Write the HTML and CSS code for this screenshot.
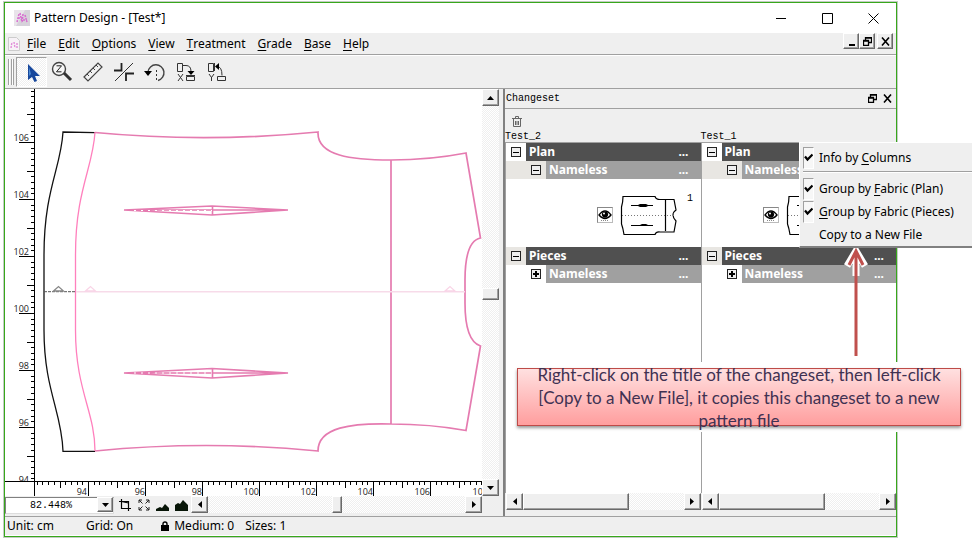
FILE: index.html
```html
<!DOCTYPE html>
<html lang="en">
<head>
<meta charset="utf-8">
<title>Pattern Design</title>
<link rel="stylesheet" href="styles.css">
</head>
<body>
<svg class="defs" aria-hidden="true">
  <symbol id="restore" viewBox="0 0 9 9"><path d="M2.500 3V.5h6v5H6M2 1h7M.5 3.500h5v5h-5zM0 4h6" fill="none" stroke="#000" stroke-width="1.300"/></symbol>
  <symbol id="cross" viewBox="0 0 9 9"><path d="M1 .5l7 8M8 .5l-7 8" fill="none" stroke="#000" stroke-width="1.600"/></symbol>
  <symbol id="eye" viewBox="0 0 14 12"><path d="M1 6Q7-2 13 6Q7 13 1 6z" fill="#fff" stroke="#000" stroke-width="1.300"/><circle cx="7" cy="5.600" r="3.100"/><circle cx="6" cy="4.600" r="1" fill="#fff"/><path d="M3 11.500h8" stroke="#888" stroke-dasharray="1 1"/></symbol>
  <symbol id="piece" viewBox="0 0 58 42"><path d="M3 2.500H35Q36 5.500 40 5.500H46H54L56 16Q53 18 53 21Q53 24 56 27L54 38H46H40Q36 37.500 35 40.500H4Q3 34 1.500 30V13Q3 8 3 2.500zM45.500 6V37" fill="none" stroke="#000" stroke-width="1.200"/><path d="M2 21.500H54" stroke="#777" stroke-dasharray="1 2"/><path d="M11 11H18L20 10H26L28 11H33V12H28L26 13H20L18 12H11zM11 31H20L22 30H26L28 31H33V32H11z"/></symbol>
  <symbol id="tri-left" viewBox="0 0 4 7"><path d="M4 0v7L0 3.500z"/></symbol>
  <symbol id="tri-right" viewBox="0 0 4 7"><path d="M0 0v7L4 3.500z"/></symbol>
  <symbol id="tri-up" viewBox="0 0 7 4"><path d="M0 4h7L3.500 0z"/></symbol>
  <symbol id="tri-down" viewBox="0 0 7 4"><path d="M0 0h7L3.500 4z"/></symbol>
  <symbol id="check" viewBox="0 0 9 9"><path d="M1 3.500L3.500 6.500L8.500 1.500" fill="none" stroke="#000" stroke-width="2.200"/></symbol>
</svg>

<main class="app">
  <header class="titlebar">
    <svg class="appicon" viewBox="0 0 16 16"><rect width="16" height="16" fill="#e9e4ea"/><path d="M11 0h5v16H2z" fill="#d6d2da"/><path d="M3 12l2-8M6 3l2 9M9 4l-1 9M11 5l2 7M4 8h4M9 10h4" stroke="#d86bd0" stroke-width="1.500" stroke-dasharray="2 1" fill="none"/></svg>
    <h1>Pattern Design - [Test*]</h1>
    <div class="wincontrols">
      <button aria-label="Minimize"><svg width="11" height="11"><path d="M0 5.500h10" stroke="#000"/></svg></button>
      <button aria-label="Maximize"><svg width="11" height="11"><path d="M.5.5h10v10H.5z" stroke="#000" fill="none"/></svg></button>
      <button aria-label="Close"><svg width="11" height="11"><path d="M.5.5l10 10M10.500.5l-10 10" stroke="#000"/></svg></button>
    </div>
  </header>

  <nav class="menubar">
    <svg class="docicon" viewBox="0 0 12 14"><path d="M.5.5h8l3 3v10H.5z" fill="#f7f2f7" stroke="#ccc"/><path d="M3 11l1-6M6 5l1 6M9 6v5" stroke="#e08ad8" stroke-width="1.400" stroke-dasharray="2 1"/></svg>
    <button><u>F</u>ile</button><button><u>E</u>dit</button><button><u>O</u>ptions</button><button><u>V</u>iew</button><button><u>T</u>reatment</button><button><u>G</u>rade</button><button><u>B</u>ase</button><button><u>H</u>elp</button>
    <div class="mdi">
      <button class="raised" aria-label="Minimize document"><svg width="9" height="9"><path d="M2 8h6" stroke="#000" stroke-width="2"/></svg></button>
      <button class="raised" aria-label="Restore document"><svg width="9" height="9"><use href="#restore"/></svg></button>
      <button class="raised last" aria-label="Close document"><svg width="9" height="9"><use href="#cross"/></svg></button>
    </div>
  </nav>

  <div class="toolbar">
    <span class="grip"></span>
    <button class="active" aria-label="Select"><svg width="24" height="24"><path d="M9 4v16l4-3 2.500 5 2.500-1-2-5h5z" fill="#17479c"/><path d="M10 7v9l2-2z" fill="#4c8bd4"/></svg></button>
    <button aria-label="Zoom"><svg width="24" height="24"><circle cx="9" cy="9" r="6.500" fill="#f6f6f6" stroke="#444" stroke-width="1.400"/><path d="M6.500 5.800h5l-5 6h5" fill="none" stroke="#222"/><path d="M14 13l7 7" stroke="#333" stroke-width="3"/></svg></button>
    <button aria-label="Measure"><svg width="24" height="24"><path d="M3 17L17 3l4 4L7 21z" fill="#f2f2f2" stroke="#444" stroke-width="1.200"/><path d="M6 14l2 2M9 11l2 2M12 8l2 2M15 5l2 2" stroke="#444"/></svg></button>
    <button aria-label="Intersect"><svg width="24" height="24"><path d="M3 21L21 3" stroke="#333"/><path d="M2 10.500h7.500V3M14 21v-7.500h8" stroke="#222" stroke-width="1.800" fill="none"/></svg></button>
    <button aria-label="Rotate"><svg width="24" height="24"><path d="M5 12A8 8 0 1 1 15 20.500" stroke="#444" stroke-width="1.400" fill="none"/><path d="M1 11h8l-4 5z"/><path d="M13.500 10v10" stroke="#333" stroke-dasharray="2 2"/></svg></button>
    <button aria-label="Align X"><svg width="24" height="24"><path d="M3.500 3.500h5v8h-5zM12.500 16.500h8v4h-8zM9 5.500h3q5 0 5 6" stroke="#333" fill="none"/><path d="M13.500 11h7l-3.500 4z"/><path d="M12 15.500h9M4 14l5 7M9 14l-5 7" stroke="#333"/></svg></button>
    <button aria-label="Align Y"><svg width="24" height="24"><path d="M3.500 3.500h5v8h-5zM12.500 16.500h8v4h-8zM12 6.500q5 0 5 9M9.500 3v8M4 14l2.500 3.500L9 14M6.500 17v4" stroke="#333" fill="none"/><path d="M14 3v7l-4-3.500z"/></svg></button>
  </div>

  <div class="workspace">
    <section class="drawing">
      <svg class="canvas" viewBox="5 89 477 407" preserveAspectRatio="xMinYMin slice" role="img" aria-label="Pattern drawing">
        <g fill="none" stroke="#e57bb0" stroke-width="1.700">
          <path d="M95 132.600L63 132C61 168 44 190 44 255V330C44 390 62 412 63 451.300H95" stroke="#111" stroke-width="1.300"/>
          <path d="M95 132C93 168 75.500 190 75.500 255V330C75.500 390 95 412 95 451" stroke="#ff80bd" stroke-width="1.300"/>
          <path d="M95 132.500Q206 143 318 132C317 156 352 160 391 160Q430 160 466 153L480.500 238Q465 241 465 280V303Q465 341 480.500 346L466 430.500Q430 424 391 424C352 423 318 427 318 451Q206 440 95 451M391 160V424"/>
          <path d="M124 210L212 206L288 210L212 215zM124 210H288M212.500 206V215M124 373L212 368.500L288 373L212 378zM124 373H288M212.500 368V378" stroke-width="1.600"/>
          <path d="M134 210.500H212M134 373H212" stroke="#fff" stroke-dasharray="2 5" stroke-width="1.200"/>
          <path d="M44 291.700H75" stroke="#555" stroke-width="1" stroke-dasharray="3 1"/>
          <path d="M76 291.700H465" stroke="#f7dbe9" stroke-width="1.500"/>
          <path d="M53.500 291L58.500 286.500L63.500 291z" stroke="#888" stroke-width="1.300"/>
          <path d="M85.500 291L90.500 286.500L95.500 291zM445 291L450 286.500L455 291z" stroke="#f9d5e7" stroke-width="1.300"/>
        </g>
        <rect x="5" y="481" width="1000" height="15" fill="#fff"/>
        <path d="M34.500 89V496M5 481.500H1005" stroke="#000" fill="none"/>
        <path id="ticks" stroke="#000" fill="none"/>
        <g class="scale">
          <text x="29" y="141">106</text><text x="29" y="198">104</text><text x="29" y="255">102</text><text x="29" y="312">100</text><text x="29" y="369">98</text><text x="29" y="426">96</text>
          <clipPath id="cut"><path d="M5 440h30v41H5z"/></clipPath><text x="29" y="483" clip-path="url(#cut)">94</text>
          <text x="87" y="495">94</text><text x="145" y="495">96</text><text x="202" y="495">98</text><text x="259" y="495">100</text><text x="316" y="495">102</text><text x="373" y="495">104</text><text x="430" y="495">106</text><text x="488" y="495">108</text>
        </g>
      </svg>
      <div class="scroll vertical">
        <button class="raised" aria-label="Scroll up"><svg width="7" height="4"><use href="#tri-up"/></svg></button>
        <span class="space-a"></span><span class="thumb raised"></span><span class="space-b"></span>
        <button class="raised" aria-label="Scroll down"><svg width="7" height="4"><use href="#tri-down"/></svg></button>
      </div>
      <div class="zoombar">
        <div class="combo">
          <select aria-label="Zoom level"><option>82.448%</option></select>
          <span class="drop raised"><svg width="7" height="4"><use href="#tri-down"/></svg></span>
        </div>
        <button aria-label="Fit piece"><svg width="12" height="12"><path d="M2.500 0v9.500H9.500V2.500H0M9.500 12V8M12 9.500H9M2.500 2.500L9.500 4" stroke="#000" stroke-width="1.200" fill="none"/></svg></button>
        <button aria-label="Fit all"><svg width="12" height="12"><path d="M1 4V1h3M8 1h3v3M11 8v3H8M4 11H1V8M1 1l3.500 3.500M11 1L7.500 4.500M11 11L7.500 7.500M1 11l3.500-3.500" stroke="#222" fill="none"/></svg></button>
        <button aria-label="Smaller"><svg width="13" height="12"><path d="M0 12V10l4-2 2 1 3-4 4 4v3z" fill="#071507"/></svg></button>
        <button aria-label="Larger"><svg width="13" height="12"><path d="M0 12V6l3-2 2 1 3-4 5 5v6z" fill="#071507"/></svg></button>
        <div class="scroll horizontal">
          <button class="raised" aria-label="Scroll left"><svg width="4" height="7"><use href="#tri-left"/></svg></button>
          <span class="space-a"></span><span class="thumb raised"></span><span class="space-b"></span>
          <button class="raised" aria-label="Scroll right"><svg width="4" height="7"><use href="#tri-right"/></svg></button>
        </div>
      </div>
    </section>

    <aside class="panel">
      <div class="paneltitle">
        <h2>Changeset</h2>
        <button aria-label="Float panel"><svg width="9" height="9"><use href="#restore"/></svg></button>
        <button aria-label="Close panel"><svg width="9" height="9"><use href="#cross"/></svg></button>
      </div>
      <div class="paneltools"><button aria-label="Delete"><svg width="10" height="11"><path d="M0 2.500h10M3.500 2V.5h3V2M1.500 3v7.500h7V3M3.500 5v4M5 5v4M6.500 5v4" stroke="#666" fill="none"/></svg></button></div>
      <div class="columns">
        <section class="column">
          <h3>Test_2</h3>
          <div class="tree">
            <div class="row plan"><button class="toggle" aria-label="Collapse"></button><b>Plan<i>...</i></b></div>
            <div class="row sub"><button class="toggle" aria-label="Collapse"></button><b>Nameless<i>...</i></b></div>
            <div class="preview"><button class="eye" aria-label="Show piece"><svg width="14" height="12"><use href="#eye"/></svg></button><svg class="piece" width="58" height="42"><use href="#piece"/></svg><span>1</span></div>
            <div class="row"><button class="toggle" aria-label="Collapse"></button><b>Pieces<i>...</i></b></div>
            <div class="row sub closed"><button class="toggle plus" aria-label="Expand"></button><b>Nameless<i>...</i></b></div>
          </div>
          <div class="scroll horizontal"><button class="raised" aria-label="Scroll left"><svg width="4" height="7"><use href="#tri-left"/></svg></button><span class="thumb raised wide"></span><span class="space-b"></span><button class="raised" aria-label="Scroll right"><svg width="4" height="7"><use href="#tri-right"/></svg></button></div>
        </section>
        <section class="column">
          <h3>Test_1</h3>
          <div class="tree">
            <div class="row plan"><button class="toggle" aria-label="Collapse"></button><b>Plan<i>...</i></b></div>
            <div class="row sub"><button class="toggle" aria-label="Collapse"></button><b>Nameless<i>...</i></b></div>
            <div class="preview shifted"><button class="eye" aria-label="Show piece"><svg width="14" height="12"><use href="#eye"/></svg></button><svg class="piece" width="58" height="42"><use href="#piece"/></svg></div>
            <div class="row"><button class="toggle" aria-label="Collapse"></button><b>Pieces<i>...</i></b></div>
            <div class="row sub closed"><button class="toggle plus" aria-label="Expand"></button><b>Nameless<i>...</i></b></div>
          </div>
          <div class="scroll horizontal"><button class="raised" aria-label="Scroll left"><svg width="4" height="7"><use href="#tri-left"/></svg></button><span class="thumb raised wide"></span><span class="space-b"></span><button class="raised" aria-label="Scroll right"><svg width="4" height="7"><use href="#tri-right"/></svg></button></div>
        </section>
      </div>
    </aside>
  </div>

  <footer class="status">
    <span>Unit: cm</span><span>Grid: On</span>
    <span class="medium"><svg width="8" height="10"><path d="M0 4h8v6H0z"/><path d="M2 5V3q0-2 2-2t2 2v2" fill="none" stroke="#000" stroke-width="1.400"/></svg>Medium: 0</span>
    <span>Sizes: 1</span>
  </footer>

  <div class="context">
    <button><span class="mark"><svg width="9" height="9"><use href="#check"/></svg></span><span>Info by <u>C</u>olumns</span></button>
    <hr>
    <button><span class="mark"><svg width="9" height="9"><use href="#check"/></svg></span><span>Group by <u>F</u>abric (Plan)</span></button>
    <button><span class="mark"><svg width="9" height="9"><use href="#check"/></svg></span><span><u>G</u>roup by Fabric (Pieces)</span></button>
    <button><span class="nomark"></span><span>Copy to a New File</span></button>
  </div>
  <div class="callout"><p>Right-click on the title of the changeset, then left-click<br>[Copy to a New File], it copies this changeset to a new<br>pattern file</p></div>
  <svg class="arrow" width="24" height="108"><path d="M12 2V28M3 18L12 3L21 18" fill="none" stroke="#fff" stroke-width="7"/><path d="M12 3V108M5 17L12 3L19 17" fill="none" stroke="#c0504d" stroke-width="3"/></svg>
</main>
<script src="ticks.js"></script>
</body>
</html>
```
FILE: styles.css
```css
* { box-sizing: border-box; }
body {
  margin: 0;
  padding: 2px 75px 10px 4px;
  min-height: 100vh;
  display: flex;
  overflow: hidden;
  background: #fff;
  color: #000;
  font: 12px/16px "Noto Sans", "Open Sans", sans-serif;
}
button { padding: 0; margin: 0; border: 0; background: none; color: inherit; font: inherit; display: flex; align-items: center; justify-content: center; }
h1, h2, h3, p { margin: 0; font: inherit; }
svg { display: block; flex: none; }
.defs { position: absolute; width: 0; height: 0; }
u { text-underline-offset: 2px; }

.app {
  position: relative;
  flex: 1;
  min-width: 0;
  display: flex;
  flex-direction: column;
  border: 1px solid #37a71b;
  box-shadow: 0 0 0 1px #c4ccc4;
  background: #efefef;
}
.raised { background: #efefef; border: 1px solid; border-color: #fff #696969 #696969 #fff; box-shadow: inset -1px -1px #a0a0a0; }

.titlebar { height: 30px; flex: none; display: flex; align-items: center; gap: 4px; padding-left: 9px; background: #fff; }
.appicon { width: 16px; height: 16px; }
.wincontrols { display: flex; margin-left: auto; }
.wincontrols button { width: 46px; height: 30px; }

.menubar { height: 22px; flex: none; display: flex; align-items: center; gap: 12px; padding: 0 3px; border-bottom: 1px solid #a0a0a0; }
.docicon { width: 12px; height: 14px; margin-right: -5px; }
.mdi { margin-left: auto; align-self: flex-start; display: flex; }
.mdi button { width: 16px; height: 16px; }
.mdi .last { margin-left: 2px; }

.toolbar { height: 34px; flex: none; display: flex; align-items: center; padding: 0 3px; border-top: 1px solid #fff; border-bottom: 1px solid #a0a0a0; }
.grip { width: 6px; height: 26px; margin-right: 2px; border: solid #a0a0a0; border-width: 0 1px; background: linear-gradient(90deg, #fff 1px, #efefef 1px 2px, #a0a0a0 2px 3px, #fff 3px); }
.toolbar button { width: 31px; height: 30px; }
.toolbar button svg { margin-right: 2px; }
.toolbar .active { background: repeating-conic-gradient(#fff 0 25%, #efefef 0 50%) 0 0 / 2px 2px; border: 1px solid; border-color: #a0a0a0 #fff #fff #a0a0a0; }

.workspace { flex: 1; min-height: 0; display: flex; }
.drawing { flex: 1; min-width: 0; display: grid; grid-template-columns: 1fr 17px; grid-template-rows: 1fr 20px; padding-right: 4px; }
.canvas { width: 100%; height: 100%; min-height: 0; background: #fff; }
.scale { font: 9px "Open Sans", sans-serif; text-anchor: end; fill: #222; }
.scroll { display: flex; background: repeating-conic-gradient(#fff 0 25%, #efefef 0 50%) 0 0 / 2px 2px; }
.scroll button { flex: none; width: 17px; height: 17px; }
.vertical { flex-direction: column; }
.vertical .space-a { flex: 182; }
.vertical .space-b { flex: 180; }
.vertical .thumb { height: 12px; }
.horizontal { height: 17px; }
.thumb { flex: none; }
.zoombar { grid-column: 1 / 3; display: flex; align-items: flex-start; padding-right: 17px; }
.zoombar > button { width: 19px; height: 18px; }
.zoombar .scroll { flex: 1; }
.zoombar .space-a { flex: 124; }
.zoombar .space-b { flex: 124; }
.zoombar .thumb { width: 10px; }
.combo { width: 109px; height: 17px; position: relative; margin-right: 1px; }
.combo select { appearance: none; width: 100%; height: 100%; padding: 0 24px; border: 1px solid; border-color: #808080 #ddd #ddd #808080; border-radius: 0; background: #fff; color: #000; font: 10px "Liberation Mono", monospace; }
.drop { position: absolute; right: 1px; top: 1px; bottom: 1px; width: 16px; display: flex; align-items: center; justify-content: center; pointer-events: none; }

.panel { flex: none; width: 393px; display: flex; flex-direction: column; border-left: 2px solid #808080; padding-bottom: 6px; }
.paneltitle { height: 20px; flex: none; display: flex; align-items: center; gap: 6px; padding: 0 4px 0 1px; border-bottom: 1px solid #a0a0a0; }
.paneltitle h2 { margin-right: auto; font: 10px "Liberation Mono", monospace; }
.paneltools { height: 22px; flex: none; display: flex; align-items: center; padding: 2px 7px 0; }
.columns { flex: 1; min-height: 0; display: grid; grid-template-columns: 1fr 1fr; }
.column { min-width: 0; display: flex; flex-direction: column; }
.column h3 { height: 11px; flex: none; font: 10px/11px "Liberation Mono", monospace; }
.tree { flex: 1; border: solid #a0a0a0; border-width: 1px 0 0 1px; background: #fff; }
.column > .scroll { margin-left: 1px; }
.column .wide { width: 106px; }
.column .space-b { flex: 1; }
.row { height: 18px; display: flex; align-items: center; padding-left: 5px; gap: 5px; background: #e8e6e2; }
.row.plan, .row.closed { background: #fff; }
.row.sub { padding-left: 25px; }
.row b { flex: 1; height: 100%; display: flex; justify-content: space-between; padding: 0 12px 0 3px; background: #505050; color: #fff; font: bold 12px/18px "Noto Sans", sans-serif; }
.row.sub b { background: #a0a0a0; }
.row i { font-style: normal; }
.toggle { flex: none; width: 10px; height: 10px; border: 1px solid #222; background: linear-gradient(#000, #000) center / 6px 1px no-repeat, #eee; }
.toggle.plus { background: linear-gradient(#000, #000) center / 6px 2px no-repeat, linear-gradient(#000, #000) center / 2px 6px no-repeat, #eee; }
.preview { height: 68px; display: flex; align-items: center; padding: 4px 6px 0 91px; gap: 7px; overflow: hidden; }
.preview.shifted { padding-left: 61px; }
.preview span { align-self: flex-start; margin: 8px 0 0 2px; font: 10px/16px "Liberation Mono", monospace; }
.eye { flex: none; width: 16px; height: 16px; border: 1px solid; border-color: #888 #bbb #bbb #888; }

.status { height: 20px; flex: none; display: flex; align-items: center; gap: 32px; padding: 0 2px 1px; border-top: 1px solid #a0a0a0; border-bottom: 1px solid #fff; }
.medium { display: flex; align-items: center; gap: 5px; margin: 0 -21px 0 -4px; }

.context { position: absolute; left: 794px; top: 139px; width: 180px; padding: 3px 3px 0; background: #efefef; border: 1px solid #fff; border-bottom: 2px solid #808080; }
.context button { width: 100%; height: 23px; justify-content: flex-start; gap: 5px; white-space: nowrap; }
.context hr { margin: 2px 0 4px; border: 0; border-top: 1px solid #a0a0a0; border-bottom: 1px solid #fff; }
.mark, .nomark { width: 11px; height: 22px; flex: none; }
.mark { display: flex; align-items: center; justify-content: center; border: 1px solid; border-color: #a0a0a0 #fff #fff #a0a0a0; background: #f7f7f7; }
.callout {
  position: absolute;
  left: 512px;
  top: 365px;
  width: 444px;
  height: 58px;
  display: flex;
  align-items: center;
  justify-content: center;
  border: 1px solid #be4b48;
  background: linear-gradient(#ffe0e0, #ff9e9e);
  box-shadow: 0 2px 3px #999, 0 0 0 6px #fff;
  color: #403152;
  text-align: center;
  white-space: nowrap;
  font: 17px/23px Lato, sans-serif;
}
.arrow { position: absolute; left: 839px; top: 245px; }
```
FILE: ticks.js
```js
// Ruler ticks: one every tenth of the 57px label step, longer at halves and labels.
(function () {
  var d = '';
  for (var k = -9; k <= 60; k++) {
    var y = Math.round(142 + k * 5.7) + 0.5;
    var long = k % 10 === 0, mid = k % 5 === 0;
    if (y < 481) d += 'M34 ' + y + 'h' + (long ? -15 : mid ? -7 : -3);
  }
  for (var j = -9; j <= 160; j++) {
    var x = Math.round(88 + j * 5.7) + 0.5;
    if (x > 35) d += 'M' + x + ' 481v' + (j % 10 === 0 ? 15 : j % 5 === 0 ? 7 : 4);
  }
  document.getElementById('ticks').setAttribute('d', d);
})();
```
